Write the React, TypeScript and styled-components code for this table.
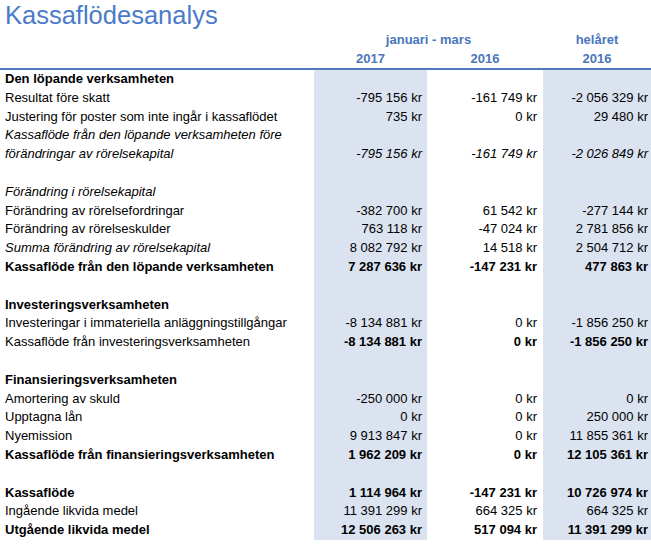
import React from "react";
import styled, { createGlobalStyle } from "styled-components";

const GlobalStyle = createGlobalStyle`
  html, body { margin: 0; padding: 0; background: #ffffff; }
  body { font-family: "Liberation Sans", Arial, sans-serif; color: #000; }
`;

type Weight = "normal" | "bold" | "italic";

interface RowData {
  label?: string;
  labelStyle?: Weight;
  valueStyle?: Weight;
  values?: [string, string, string];
  double?: boolean;
}

const rows: RowData[] = [
  { label: "Den löpande verksamheten", labelStyle: "bold" },
  { label: "Resultat före skatt", values: ["-795 156 kr", "-161 749 kr", "-2 056 329 kr"] },
  { label: "Justering för poster som inte ingår i kassaflödet", values: ["735 kr", "0 kr", "29 480 kr"] },
  {
    label: "Kassaflöde från den löpande verksamheten före förändringar av rörelsekapital",
    labelStyle: "italic",
    valueStyle: "italic",
    double: true,
    values: ["-795 156 kr", "-161 749 kr", "-2 026 849 kr"],
  },
  {},
  { label: "Förändring i rörelsekapital", labelStyle: "italic" },
  { label: "Förändring av rörelsefordringar", values: ["-382 700 kr", "61 542 kr", "-277 144 kr"] },
  { label: "Förändring av rörelseskulder", values: ["763 118 kr", "-47 024 kr", "2 781 856 kr"] },
  { label: "Summa förändring av rörelsekapital", labelStyle: "italic", values: ["8 082 792 kr", "14 518 kr", "2 504 712 kr"] },
  { label: "Kassaflöde från den löpande verksamheten", labelStyle: "bold", valueStyle: "bold", values: ["7 287 636 kr", "-147 231 kr", "477 863 kr"] },
  {},
  { label: "Investeringsverksamheten", labelStyle: "bold" },
  { label: "Investeringar i immateriella anläggningstillgångar", values: ["-8 134 881 kr", "0 kr", "-1 856 250 kr"] },
  { label: "Kassaflöde från investeringsverksamheten", valueStyle: "bold", values: ["-8 134 881 kr", "0 kr", "-1 856 250 kr"] },
  {},
  { label: "Finansieringsverksamheten", labelStyle: "bold" },
  { label: "Amortering av skuld", values: ["-250 000 kr", "0 kr", "0 kr"] },
  { label: "Upptagna lån", values: ["0 kr", "0 kr", "250 000 kr"] },
  { label: "Nyemission", values: ["9 913 847 kr", "0 kr", "11 855 361 kr"] },
  { label: "Kassaflöde från finansieringsverksamheten", labelStyle: "bold", valueStyle: "bold", values: ["1 962 209 kr", "0 kr", "12 105 361 kr"] },
  {},
  { label: "Kassaflöde", labelStyle: "bold", valueStyle: "bold", values: ["1 114 964 kr", "-147 231 kr", "10 726 974 kr"] },
  { label: "Ingående likvida medel", values: ["11 391 299 kr", "664 325 kr", "664 325 kr"] },
  { label: "Utgående likvida medel", labelStyle: "bold", valueStyle: "bold", values: ["12 506 263 kr", "517 094 kr", "11 391 299 kr"] },
];

const COLS = "314px 113px 116px 108px";
const ROW_H = 18.8;
const SHADE = "#dbe3f0";
const BLUE = "#4a76bd";

const Page = styled.div`
  width: 651px;
  font-size: 13px;
`;

const Title = styled.h1`
  margin: 0;
  padding: 0 0 0 5px;
  height: 31px;
  font-size: 25.5px;
  font-weight: normal;
  line-height: 30px;
  color: #4a7bc9;
`;

const HeaderGrid = styled.div`
  display: grid;
  grid-template-columns: ${COLS};
  grid-template-rows: 18.5px 18.5px;
  border-bottom: 2px solid #4f7bbd;
`;

const HeadCell = styled.div<{ $col: number; $span?: number; $row: number }>`
  grid-column: ${(p) => p.$col} / span ${(p) => p.$span ?? 1};
  grid-row: ${(p) => p.$row};
  text-align: center;
  font-weight: bold;
  color: ${BLUE};
  line-height: 18.5px;
  white-space: nowrap;
`;

const Body = styled.div`
  display: flex;
  flex-direction: column;
`;

const Row = styled.div<{ $double?: boolean }>`
  display: grid;
  grid-template-columns: ${COLS};
  height: ${(p) => (p.$double ? ROW_H * 2 : ROW_H)}px;
`;

const styleFor = (w?: Weight) =>
  w === "bold" ? "font-weight: bold;" : w === "italic" ? "font-style: italic;" : "";

const Label = styled.div<{ $w?: Weight }>`
  padding-left: 5px;
  line-height: ${ROW_H}px;
  ${(p) => styleFor(p.$w)}
  overflow: hidden;
`;

const Value = styled.div<{ $w?: Weight; $shaded?: boolean; $pad: number }>`
  display: flex;
  align-items: flex-end;
  justify-content: flex-end;
  padding-right: ${(p) => p.$pad}px;
  line-height: ${ROW_H}px;
  white-space: nowrap;
  background: ${(p) => (p.$shaded ? SHADE : "transparent")};
  ${(p) => styleFor(p.$w)}
`;

const pads = [5, 6, 3];

export default function App() {
  return (
    <>
      <GlobalStyle />
      <Page>
        <Title>Kassaflödesanalys</Title>
        <HeaderGrid>
          <HeadCell $col={2} $span={2} $row={1}>januari - mars</HeadCell>
          <HeadCell $col={4} $row={1}>helåret</HeadCell>
          <HeadCell $col={2} $row={2}>2017</HeadCell>
          <HeadCell $col={3} $row={2}>2016</HeadCell>
          <HeadCell $col={4} $row={2}>2016</HeadCell>
        </HeaderGrid>
        <Body>
          {rows.map((r, i) => (
            <Row key={i} $double={r.double}>
              <Label $w={r.labelStyle}>{r.label ?? ""}</Label>
              {[0, 1, 2].map((c) => (
                <Value key={c} $w={r.valueStyle} $shaded={c !== 1} $pad={pads[c]}>
                  {r.values ? r.values[c] : ""}
                </Value>
              ))}
            </Row>
          ))}
        </Body>
      </Page>
    </>
  );
}
